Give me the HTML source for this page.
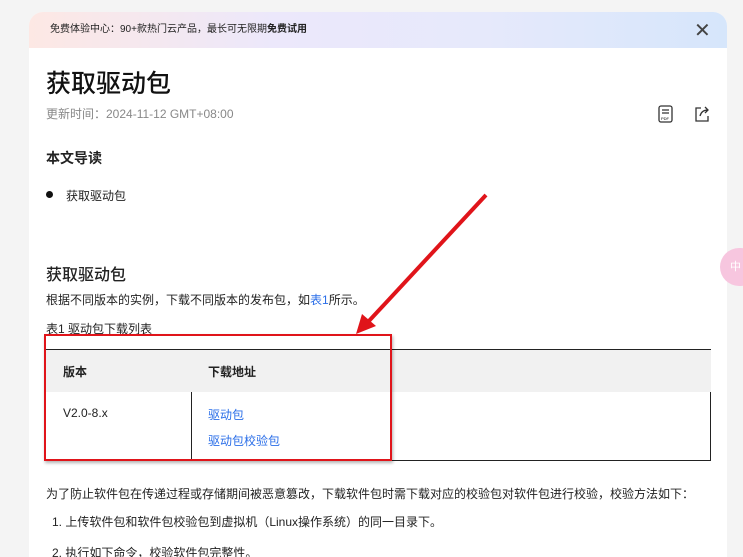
<!DOCTYPE html>
<html><head><meta charset="utf-8"><style>
*{margin:0;padding:0;box-sizing:border-box}
html,body{width:743px;height:557px;overflow:hidden}
body{background:#f4f4f4;font-family:"Liberation Sans","Noto Sans CJK SC",sans-serif;color:#222;position:relative}
.card{position:absolute;left:29px;top:12px;width:698px;height:545px;background:#fff;border-radius:14px 14px 0 0;overflow:hidden}
.banner{height:36px;background:linear-gradient(90deg,#fde8e4 0%,#ece8fb 35%,#e6e9fb 65%,#d6e6fb 100%);font-size:10px;line-height:36px;padding-left:21px;color:#222}
.abs{position:absolute}
a{color:#2a6ee8;text-decoration:none}
</style></head><body>
<div class="card">
<div class="banner">免费体验中心：90+款热门云产品，最长可无限期<b>免费试用</b></div>
</div>
<div class="abs" style="left:694px;top:18px;font-size:20px;color:#444">✕</div>
<div class="abs" style="left:46px;top:64px;font-size:25px;font-weight:500;color:#111">获取驱动包</div>
<div class="abs" style="left:46px;top:105px;font-size:12px;color:#888">更新时间：2024-11-12 GMT+08:00</div>
<svg class="abs" style="left:657px;top:104px" width="18" height="20" viewBox="0 0 18 20"><rect x="2" y="2" width="13" height="16" rx="2" fill="none" stroke="#333" stroke-width="1.3"/><path d="M5 6h7M5 9h7" stroke="#333" stroke-width="1.2"/><text x="4" y="16" font-size="4" font-family="Liberation Sans">PDF</text></svg>
<svg class="abs" style="left:692px;top:104px" width="20" height="20" viewBox="0 0 20 20"><path d="M9 4H4v13h12v-5" fill="none" stroke="#333" stroke-width="1.3"/><path d="M8 12c1-4 4-6 8-6M13 3l3 3-3 3" fill="none" stroke="#333" stroke-width="1.3"/></svg>
<div class="abs" style="left:46px;top:148px;font-size:14px;font-weight:bold">本文导读</div>
<div class="abs" style="left:46px;top:191px;width:7px;height:7px;border-radius:50%;background:#111"></div>
<div class="abs" style="left:66px;top:187px;font-size:12px">获取驱动包</div>
<div class="abs" style="left:46px;top:261px;font-size:16px;font-weight:500">获取驱动包</div>
<div class="abs" style="left:46px;top:291px;font-size:12px">根据不同版本的实例，下载不同版本的发布包，如<a>表1</a>所示。</div>
<div class="abs" style="left:46px;top:320px;font-size:12px">表1 <a style="color:#222">驱动包下载列表</a></div>
<div class="abs" style="left:45px;top:349px;width:666px;height:43px;background:#f1f1f1;border-top:1px solid #222"></div>
<div class="abs" style="left:45px;top:392px;width:666px;height:69px;border:1px solid #222;border-top:none"></div>
<div class="abs" style="left:191px;top:392px;width:1px;height:69px;background:#222"></div>
<div class="abs" style="left:63px;top:363px;font-size:12px;font-weight:bold">版本</div>
<div class="abs" style="left:208px;top:363px;font-size:12px;font-weight:bold">下载地址</div>
<div class="abs" style="left:63px;top:406px;font-size:12px">V2.0-8.x</div>
<div class="abs" style="left:208px;top:406px;font-size:12px"><a>驱动包</a></div>
<div class="abs" style="left:208px;top:432px;font-size:12px"><a>驱动包校验包</a></div>
<div class="abs" style="left:44px;top:334px;width:348px;height:127px;border:2px solid #e0141a;box-shadow:1px 2px 3px rgba(0,0,0,.3)"></div>
<svg class="abs" style="left:0;top:0" width="743" height="557"><path d="M486 195L368 322" stroke="#e0141a" stroke-width="4" fill="none"/><path d="M356 334l6-20 14 12z" fill="#e0141a"/></svg>
<div class="abs" style="left:46px;top:485px;font-size:12px">为了防止软件包在传递过程或存储期间被恶意篡改，下载软件包时需下载对应的校验包对软件包进行校验，校验方法如下：</div>
<div class="abs" style="left:52px;top:513px;font-size:12px">1. 上传软件包和软件包校验包到虚拟机（Linux操作系统）的同一目录下。</div>
<div class="abs" style="left:52px;top:544px;font-size:12px">2. 执行如下命令，校验软件包完整性。</div>
<div class="abs" style="left:720px;top:248px;width:40px;height:38px;border-radius:19px;background:#f7c6df;color:#fff;font-size:11px;line-height:38px;padding-left:10px">中</div>
</body></html>
